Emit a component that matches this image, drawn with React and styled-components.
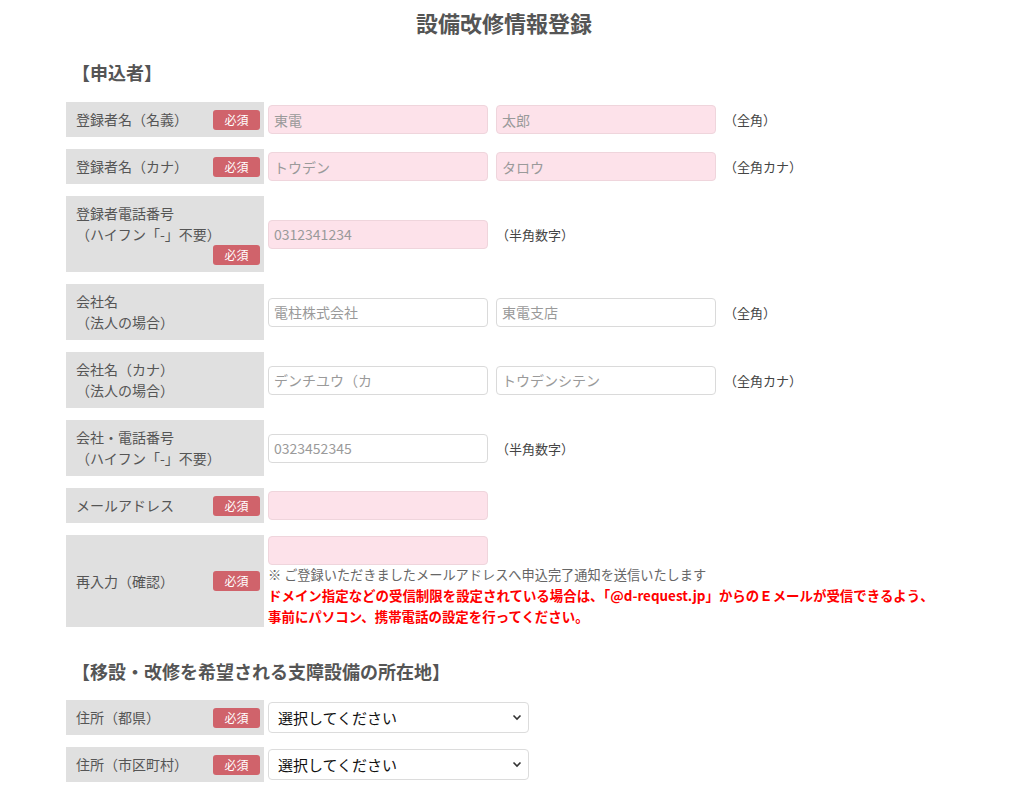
import React from 'react';
import styled, { createGlobalStyle } from 'styled-components';

const Global = createGlobalStyle`
  html, body { margin: 0; padding: 0; background: #fff; }
  body {
    font-family: "Noto Sans CJK JP", "Noto Sans", sans-serif;
    color: #555;
  }
`;

const Page = styled.div`
  width: 1008px;
`;

const Container = styled.div`
  width: 876px;
  margin: 0 auto;
`;

const Title = styled.h1`
  margin: 0;
  padding-top: 7px;
  font-size: 22px;
  line-height: 30px;
  font-weight: 700;
  text-align: center;
  color: #555;
`;

const SectionHeading = styled.h2`
  margin: ${(p) => p.$top}px 0 ${(p) => p.$bottom}px;
  padding-left: 6px;
  font-size: 18px;
  line-height: 26px;
  font-weight: 700;
  color: #555;
`;

const Rows = styled.div`
  display: flex;
  flex-direction: column;
  gap: 12px;
`;

const Row = styled.div`
  display: flex;
  align-items: stretch;
  gap: 4px;
`;

const Label = styled.div`
  width: 198px;
  flex: none;
  box-sizing: border-box;
  background: #e0e0e0;
  padding: 7px 4px 7px 10px;
  font-size: 14px;
  line-height: 21px;
  color: #555;
  display: ${(p) => (p.$stacked ? 'block' : 'flex')};
  align-items: center;
  justify-content: space-between;
`;

const LabelText = styled.span`
  white-space: pre-line;
`;

const BadgeLine = styled.div`
  display: flex;
  justify-content: flex-end;
`;

const Badge = styled.span`
  display: inline-flex;
  align-items: center;
  justify-content: center;
  width: 47px;
  height: 20px;
  border-radius: 3px;
  background: #d0636b;
  color: #fff;
  font-size: 12px;
  line-height: 20px;
  flex: none;
`;

const Field = styled.div`
  display: flex;
  flex-direction: column;
  justify-content: ${(p) => (p.$top ? 'flex-start' : 'center')};
  padding-top: ${(p) => (p.$top ? 1 : 0)}px;
`;

const InputLine = styled.div`
  display: flex;
  align-items: center;
  gap: 8px;
`;

const TextInput = styled.input`
  width: 220px;
  height: 29px;
  box-sizing: border-box;
  margin: 0;
  padding: 0 5px;
  border: 1px solid ${(p) => (p.$required ? '#efd5dc' : '#dadada')};
  border-radius: 4px;
  background: ${(p) => (p.$required ? '#fde2ea' : '#fff')};
  font-family: "Noto Sans CJK JP", "Noto Sans", sans-serif;
  font-size: 14px;
  color: #333;
  outline: none;
  &::placeholder { color: #9a9a9a; }
`;

const Hint = styled.span`
  margin-left: 0;
  font-size: 13px;
  color: #444;
`;

const NoteGray = styled.p`
  margin: 0;
  font-size: 13.2px;
  line-height: 20px;
  color: #666;
`;

const NoteRed = styled.p`
  margin: 0;
  font-size: 13.45px;
  line-height: 21px;
  font-weight: 700;
  color: #ff0000;
  white-space: nowrap;
`;

const SelectWrap = styled.div`
  position: relative;
  width: 261px;
`;

const Select = styled.select`
  appearance: none;
  -webkit-appearance: none;
  width: 100%;
  height: 31px;
  box-sizing: border-box;
  margin: 0;
  padding: 0 28px 0 9px;
  border: 1px solid #dcdcdc;
  border-radius: 4px;
  background: #fff;
  font-family: "Noto Sans CJK JP", "Noto Sans", sans-serif;
  font-size: 15px;
  color: #111;
  outline: none;
`;

const Chevron = styled.svg`
  position: absolute;
  right: 7px;
  top: 50%;
  margin-top: -4px;
  pointer-events: none;
`;

function Req() {
  return <Badge>必須</Badge>;
}

function PrefSelect() {
  return (
    <SelectWrap>
      <Select defaultValue="">
        <option value="">選択してください</option>
      </Select>
      <Chevron width="10" height="7" viewBox="0 0 10 7">
        <path d="M1.5 1.5 L5 5 L8.5 1.5" fill="none" stroke="#333" strokeWidth="1.6" />
      </Chevron>
    </SelectWrap>
  );
}

export default function App() {
  return (
    <Page>
      <Global />
      <Container>
        <Title>設備改修情報登録</Title>
        <SectionHeading $top={22} $bottom={17}>【申込者】</SectionHeading>
        <Rows>
          <Row>
            <Label><LabelText>登録者名（名義）</LabelText><Req /></Label>
            <Field>
              <InputLine>
                <TextInput $required placeholder="東電" />
                <TextInput $required placeholder="太郎" />
                <Hint>（全角）</Hint>
              </InputLine>
            </Field>
          </Row>
          <Row>
            <Label><LabelText>登録者名（カナ）</LabelText><Req /></Label>
            <Field>
              <InputLine>
                <TextInput $required placeholder="トウデン" />
                <TextInput $required placeholder="タロウ" />
                <Hint>（全角カナ）</Hint>
              </InputLine>
            </Field>
          </Row>
          <Row>
            <Label $stacked>
              <LabelText>{'登録者電話番号\n（ハイフン「-」不要）'}</LabelText>
              <BadgeLine><Req /></BadgeLine>
            </Label>
            <Field>
              <InputLine>
                <TextInput $required placeholder="0312341234" />
                <Hint>（半角数字）</Hint>
              </InputLine>
            </Field>
          </Row>
          <Row>
            <Label><LabelText>{'会社名\n（法人の場合）'}</LabelText></Label>
            <Field>
              <InputLine>
                <TextInput placeholder="電柱株式会社" />
                <TextInput placeholder="東電支店" />
                <Hint>（全角）</Hint>
              </InputLine>
            </Field>
          </Row>
          <Row>
            <Label><LabelText>{'会社名（カナ）\n（法人の場合）'}</LabelText></Label>
            <Field>
              <InputLine>
                <TextInput placeholder="デンチユウ（カ" />
                <TextInput placeholder="トウデンシテン" />
                <Hint>（全角カナ）</Hint>
              </InputLine>
            </Field>
          </Row>
          <Row>
            <Label><LabelText>{'会社・電話番号\n（ハイフン「-」不要）'}</LabelText></Label>
            <Field>
              <InputLine>
                <TextInput placeholder="0323452345" />
                <Hint>（半角数字）</Hint>
              </InputLine>
            </Field>
          </Row>
          <Row>
            <Label><LabelText>メールアドレス</LabelText><Req /></Label>
            <Field>
              <InputLine>
                <TextInput $required />
              </InputLine>
            </Field>
          </Row>
          <Row>
            <Label><LabelText>再入力（確認）</LabelText><Req /></Label>
            <Field $top>
              <InputLine>
                <TextInput $required />
              </InputLine>
              <NoteGray>※ ご登録いただきましたメールアドレスへ申込完了通知を送信いたします</NoteGray>
              <NoteRed>ドメイン指定などの受信制限を設定されている場合は、「@d-request.jp」からのＥメールが受信できるよう、<br />事前にパソコン、携帯電話の設定を行ってください。</NoteRed>
            </Field>
          </Row>
        </Rows>
        <SectionHeading $top={31} $bottom={16}>【移設・改修を希望される支障設備の所在地】</SectionHeading>
        <Rows>
          <Row>
            <Label><LabelText>住所（都県）</LabelText><Req /></Label>
            <Field><PrefSelect /></Field>
          </Row>
          <Row>
            <Label><LabelText>住所（市区町村）</LabelText><Req /></Label>
            <Field><PrefSelect /></Field>
          </Row>
        </Rows>
      </Container>
    </Page>
  );
}
